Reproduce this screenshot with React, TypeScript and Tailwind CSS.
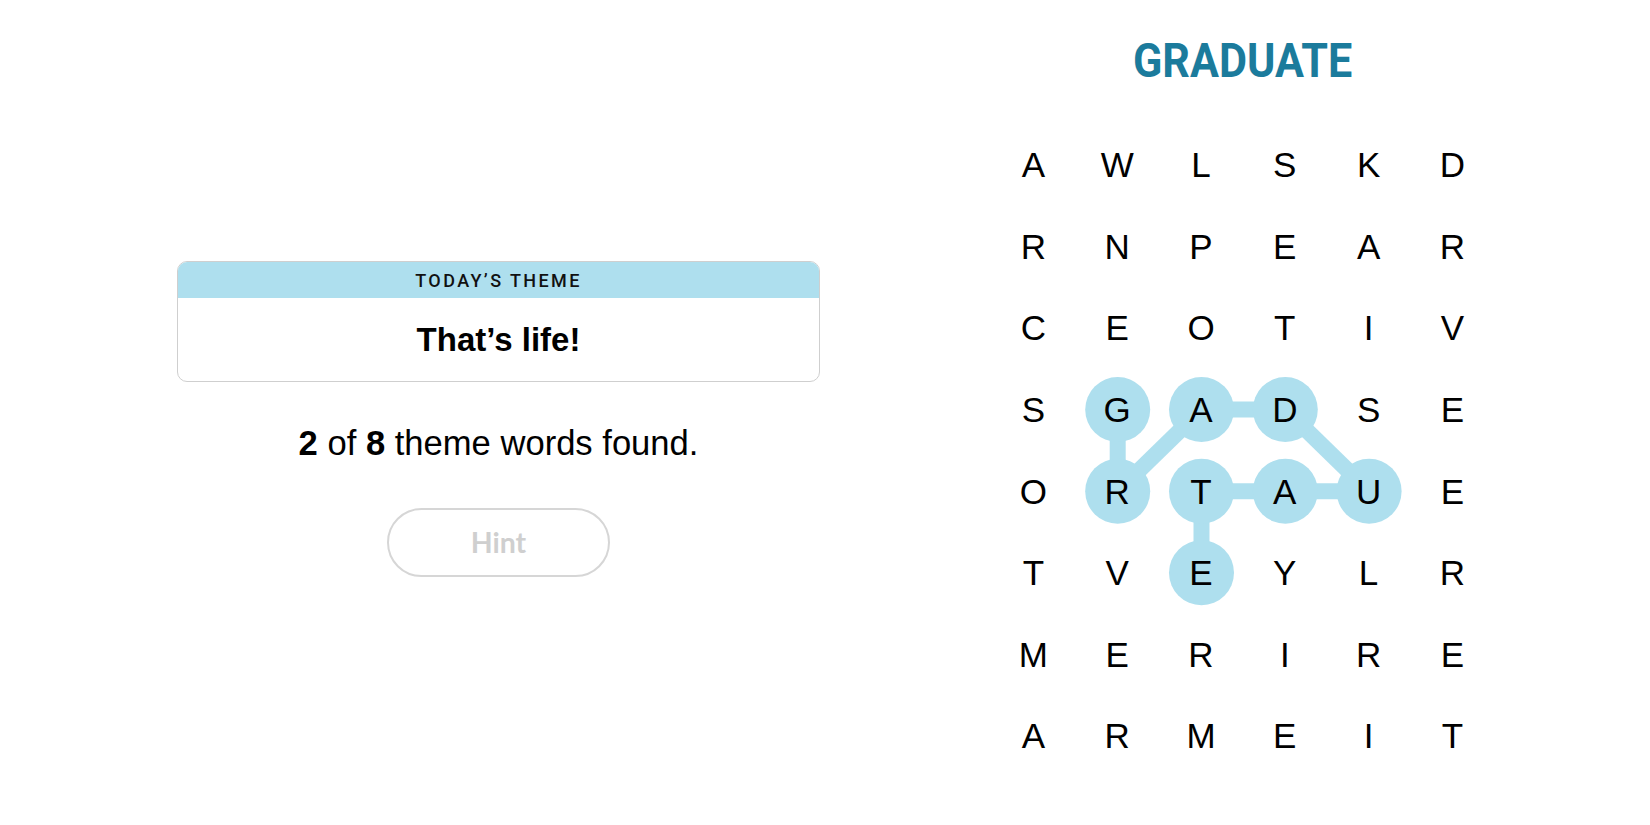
import React from "react";

const GRID = [
  "AWLSKD",
  "RNPEAR",
  "CEOTIV",
  "SGADSE",
  "ORTAUE",
  "TVEYLR",
  "MERIRE",
  "ARMEIT",
];

const PATH: [number, number][] = [
  [3, 1],
  [4, 1],
  [3, 2],
  [3, 3],
  [4, 4],
  [4, 3],
  [4, 2],
  [5, 2],
];

const CW = 83.8;
const RH = 81.6;

function Board() {
  const W = CW * 6;
  const H = RH * 8;
  const cx = (c: number) => c * CW + CW / 2;
  const cy = (r: number) => r * RH + RH / 2;
  return (
    <div className="relative mt-[36px] w-[502.8px] h-[652.8px]">
      <svg className="absolute inset-0" width={W} height={H} viewBox={`0 0 ${W} ${H}`}>
        {PATH.slice(1).map(([r, c], i) => {
          const [pr, pc] = PATH[i];
          return (
            <line
              key={`l${i}`}
              x1={cx(pc)}
              y1={cy(pr)}
              x2={cx(c)}
              y2={cy(r)}
              stroke="#aedfee"
              strokeWidth={16}
            />
          );
        })}
        {PATH.map(([r, c], i) => (
          <circle key={`c${i}`} cx={cx(c)} cy={cy(r)} r={32.5} fill="#aedfee" />
        ))}
      </svg>
      <div className="relative grid grid-cols-[repeat(6,83.8px)] grid-rows-[repeat(8,81.6px)]">
        {GRID.map((row, r) =>
          row.split("").map((ch, c) => (
            <div
              key={`${r}-${c}`}
              className="flex items-center justify-center text-[35px] leading-[35px] text-black"
            >
              {ch}
            </div>
          ))
        )}
      </div>
    </div>
  );
}

export default function App() {
  return (
    <div className="w-full h-[825px] bg-white flex text-black font-['Liberation_Sans',Arial,sans-serif]">
      <div className="ml-[177px] w-[643px] pt-[261px] flex flex-col items-center">
        <div className="w-full h-[121px] rounded-[10px] border border-[#cfcfcf] overflow-hidden flex flex-col">
          <div className="h-[36px] bg-[#aedfee] flex items-center justify-center text-[18px] tracking-[2.4px] font-medium font-['Roboto',sans-serif] text-[#111]">
            TODAY’S THEME
          </div>
          <div className="flex-1 flex items-center justify-center text-[33px] font-bold">
            That’s life!
          </div>
        </div>
        <p className="mt-[41px] text-[34.6px] leading-[40px]">
          <b>2</b> of <b>8</b> theme words found.
        </p>
        <button className="mt-[45px] w-[223px] h-[69px] rounded-full border-2 border-[#d6d6d6] bg-white text-[28.5px] font-bold text-[#cfcfcf] font-['Lato',sans-serif]">
          Hint
        </button>
      </div>
      <div className="ml-[171.5px] w-[502.8px] pt-[34px] flex flex-col items-center">
        <div className="h-[54px] text-[49px] leading-[54px] font-bold text-[#1b7b9c] font-['Roboto',sans-serif] inline-block scale-x-[0.88]">
          GRADUATE
        </div>
        <Board />
      </div>
    </div>
  );
}
